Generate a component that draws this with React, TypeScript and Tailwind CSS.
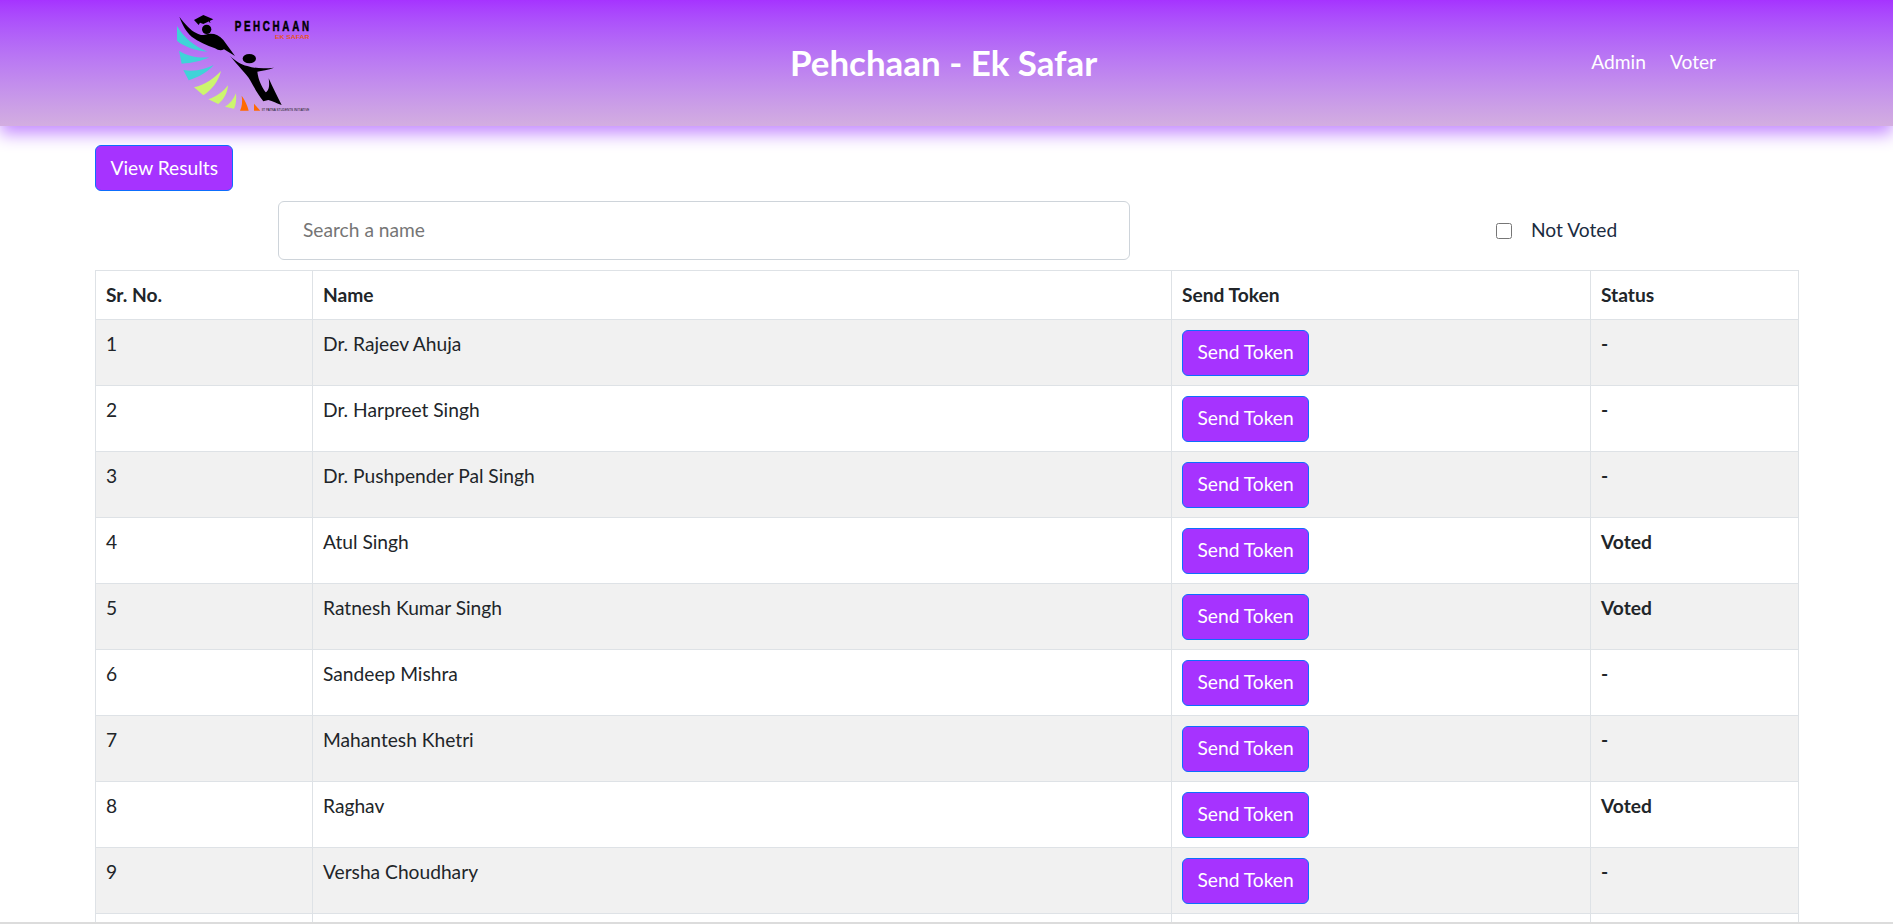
const rows = [
  { no: 1, name: 'Dr. Rajeev Ahuja', status: '-' },
  { no: 2, name: 'Dr. Harpreet Singh', status: '-' },
  { no: 3, name: 'Dr. Pushpender Pal Singh', status: '-' },
  { no: 4, name: 'Atul Singh', status: 'Voted' },
  { no: 5, name: 'Ratnesh Kumar Singh', status: 'Voted' },
  { no: 6, name: 'Sandeep Mishra', status: '-' },
  { no: 7, name: 'Mahantesh Khetri', status: '-' },
  { no: 8, name: 'Raghav', status: 'Voted' },
  { no: 9, name: 'Versha Choudhary', status: '-' },
]

const Logo = () => (
  <svg width="200" height="115" viewBox="0 0 600 345" className="block">
    {/* upper figure */}
    <path d="M88 50 C105 72 120 90 140 100 C150 106 158 106 165 104 C185 98 205 102 220 120 L255 168 L222 148 C215 152 205 152 195 145 C170 135 145 125 125 110 C108 95 96 72 88 50Z" fill="#000" />
    <circle cx="170" cy="88" r="14" fill="#000" />
    <path d="M132 60 L160 45 L190 58 L168 68 L160 72 L150 68 L146 75Z" fill="#000" />
    <path d="M176 60 L180 68" stroke="#000" strokeWidth="3" />
    {/* wing */}
    <path d="M81 78 C100 110 130 138 172 155 C140 152 100 140 81 122Z" fill="#3fd3d8" />
    <path d="M87 152 C115 170 148 175 178 172 C158 182 125 190 95 191Z" fill="#3fd3d8" />
    <path d="M100 210 C135 216 165 208 191 195 C175 215 145 232 116 241Z" fill="#3fd3d8" />
    <path d="M132 262 C165 255 192 235 213 213 C205 245 185 270 160 286Z" fill="#ccf56e" />
    <path d="M175 298 C200 290 220 275 234 256 C232 280 222 298 205 312Z" fill="#ccf56e" />
    <path d="M225 320 C240 312 250 298 258 280 C260 298 258 315 252 326Z" fill="#ccf56e" />
    <path d="M270 332 C276 320 278 305 275 287 C285 300 292 316 296 332Z" fill="#ff6a00" />
    <path d="M312 332 L312 311 L331 332Z" fill="#ff6a00" />
    {/* lower figure */}
    <ellipse cx="298" cy="176" rx="20" ry="14" fill="#000" />
    <path d="M240 168 C255 182 272 194 292 198 C315 206 345 206 372 203 C355 210 335 212 322 215 C325 240 335 260 347 277 C355 272 360 262 356 235 C368 262 382 290 395 315 C380 310 368 304 355 300 L340 304 C325 285 312 262 300 240 C290 222 262 195 240 168Z" fill="#000" />
    {/* wordmark */}
    <text transform="translate(254 93) scale(0.7 1)" fontSize="42" fontWeight="700" letterSpacing="11.5" stroke="#000" strokeWidth="1.5" fontFamily="'Liberation Sans', sans-serif" fill="#000">PEHCHAAN</text>
    <text x="375" y="117" fontSize="17" fontWeight="700" textLength="103" lengthAdjust="spacingAndGlyphs" fontFamily="'Liberation Sans', sans-serif" fill="#e8541c">EK SAFAR</text>
    <text x="335" y="333" fontSize="12" textLength="143" lengthAdjust="spacingAndGlyphs" fontFamily="'Liberation Sans', sans-serif" fill="#111">IIT PATNA STUDENTS INITIATIVE</text>
  </svg>
)

const cell = 'border border-[#dee2e6] px-[10px] pt-[10px] pb-[9px] align-top leading-[28.8px]'
const headCell = 'border border-[#dee2e6] px-[10px] align-middle font-bold'

export default function App() {
  return (
    <div className="flex h-[924px] flex-col overflow-hidden bg-white font-['Lato',sans-serif] text-[19.2px] text-[#212529]">
      <div className="flex-1 overflow-hidden">
        <header className="flex h-[126px] items-start bg-gradient-to-b from-[#a633ff] to-[#d3aee0] shadow-[0_8px_16px_#c58cff]">
          <div className="ml-[150px] w-[200px]">
            <Logo />
          </div>
          <h1 className="ml-[440px] mt-[41px] text-[34.9px] font-bold leading-[44px] text-white">Pehchaan - Ek Safar</h1>
          <nav className="ml-[494px] mt-[48px] flex gap-[24px] leading-[28px] text-white">
            <span>Admin</span>
            <span>Voter</span>
          </nav>
        </header>

        <main className="px-[95px] pt-[19px]">
          <button className="h-[46px] rounded-[6px] border border-[#0d6efd] bg-[#a633ff] px-[14.5px] text-[19.2px] leading-[28px] text-white">
            View Results
          </button>
          <div className="mt-[10px] flex items-center">
            <input
              placeholder="Search a name"
              className="ml-[183px] h-[59px] w-[852px] rounded-[6px] border border-[#ced4da] px-[24px] pb-[2px] text-[19.2px] placeholder:text-[#757575]"
            />
            <input type="checkbox" className="ml-[366px] h-[16px] w-[16px]" />
            <span className="ml-[19px] text-[#1b2c3f]">Not Voted</span>
          </div>
          <table className="mt-[10px] w-[1704px] table-fixed border-collapse text-left">
            <thead>
              <tr className="h-[49px]">
                <th className={`${headCell} w-[217px]`}>Sr. No.</th>
                <th className={`${headCell} w-[859px]`}>Name</th>
                <th className={`${headCell} w-[419px]`}>Send Token</th>
                <th className={headCell}>Status</th>
              </tr>
            </thead>
            <tbody>
              {rows.map((row) => (
                <tr key={row.no} className="h-[66px] odd:bg-[#f1f1f1]">
                  <td className={cell}>{row.no}</td>
                  <td className={cell}>{row.name}</td>
                  <td className={cell}>
                    <button className="block h-[46px] rounded-[6px] border border-[#0d6efd] bg-[#a633ff] px-[14.5px] pb-[2px] text-[19.2px] leading-[28px] text-white">
                      Send Token
                    </button>
                  </td>
                  <td className={`${cell} font-bold`}>{row.status}</td>
                </tr>
              ))}
              {/* next row is only just visible above the fold */}
              <tr className="h-[66px]">
                <td className={cell}></td>
                <td className={cell}></td>
                <td className={cell}></td>
                <td className={cell}></td>
              </tr>
            </tbody>
          </table>
        </main>
      </div>
      <div className="h-[2px] bg-[#dcdcdc]"></div>
    </div>
  )
}
